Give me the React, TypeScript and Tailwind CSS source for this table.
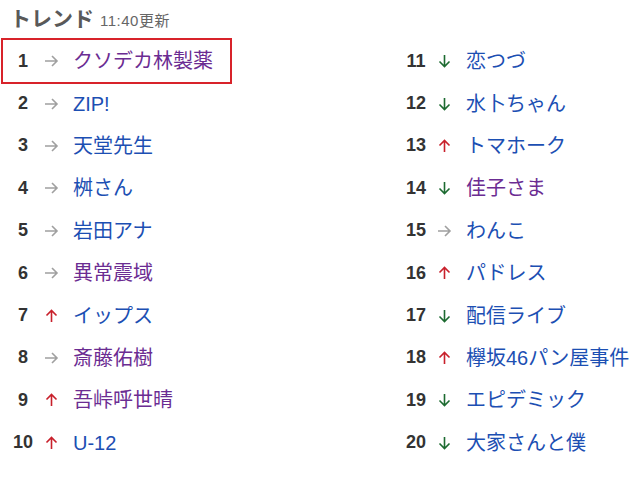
import React from 'react';

type Trend = { rank: number; dir: 'flat' | 'up' | 'down'; word: string; visited?: boolean };

const LEFT: Trend[] = [
  { rank: 1, dir: 'flat', word: 'クソデカ林製薬', visited: true },
  { rank: 2, dir: 'flat', word: 'ZIP!' },
  { rank: 3, dir: 'flat', word: '天堂先生' },
  { rank: 4, dir: 'flat', word: '桝さん' },
  { rank: 5, dir: 'flat', word: '岩田アナ' },
  { rank: 6, dir: 'flat', word: '異常震域', visited: true },
  { rank: 7, dir: 'up', word: 'イップス' },
  { rank: 8, dir: 'flat', word: '斎藤佑樹', visited: true },
  { rank: 9, dir: 'up', word: '吾峠呼世晴', visited: true },
  { rank: 10, dir: 'up', word: 'U-12' },
];

const RIGHT: Trend[] = [
  { rank: 11, dir: 'down', word: '恋つづ' },
  { rank: 12, dir: 'down', word: '水卜ちゃん' },
  { rank: 13, dir: 'up', word: 'トマホーク' },
  { rank: 14, dir: 'down', word: '佳子さま', visited: true },
  { rank: 15, dir: 'flat', word: 'わんこ' },
  { rank: 16, dir: 'up', word: 'パドレス' },
  { rank: 17, dir: 'down', word: '配信ライブ' },
  { rank: 18, dir: 'up', word: '欅坂46パン屋事件' },
  { rank: 19, dir: 'down', word: 'エピデミック' },
  { rank: 20, dir: 'down', word: '大家さんと僕' },
];

function Arrow({ dir }: { dir: Trend['dir'] }) {
  if (dir === 'flat') {
    return (
      <svg width="15" height="14" viewBox="0 0 15 14" fill="none" stroke="#a0a0a0" strokeWidth="1.6">
        <path d="M1 7h12M8 2l5 5-5 5" />
      </svg>
    );
  }
  if (dir === 'up') {
    return (
      <svg width="15" height="14" viewBox="0 0 15 14" fill="none" stroke="#c8202b" strokeWidth="1.6">
        <path d="M7.5 13V1.5M2.5 6.5l5-5 5 5" />
      </svg>
    );
  }
  return (
    <svg width="15" height="14" viewBox="0 0 15 14" fill="none" stroke="#1c6a30" strokeWidth="1.6">
      <path d="M7.5 1v11.5M2.5 7.5l5 5 5-5" />
    </svg>
  );
}

function Row({ t }: { t: Trend }) {
  return (
    <li
      className={
        'flex items-center h-[42.4px] ' +
        (t.rank === 1 ? 'w-[227px] outline-2 outline-[#d8232a]' : '')
      }
    >
      <span className="w-[40px] text-center text-[18px] font-bold text-[#333]">{t.rank}</span>
      <span className="w-[30px] pl-[1px] flex items-center">
        <Arrow dir={t.dir} />
      </span>
      <span className={'text-[20px] ' + (t.visited ? 'text-[#6b2c92]' : 'text-[#1c4fb3]')}>{t.word}</span>
    </li>
  );
}

export default function App() {
  return (
    <div
      className="w-[638px] h-[479px] bg-white overflow-hidden"
      style={{ fontFamily: '"Liberation Sans", "Noto Sans CJK JP", sans-serif' }}
    >
      <div className="h-[40px] pl-[10px] pt-[3px] flex items-baseline gap-[6px]">
        <h2 className="text-[21px] font-bold text-[#595959]">トレンド</h2>
        <span className="text-[15px] tracking-[0.5px] text-[#666]">11:40更新</span>
      </div>
      <div className="grid grid-cols-[393px_1fr]">
        <ul className="pl-[3px]">
          {LEFT.map((t) => (
            <Row key={t.rank} t={t} />
          ))}
        </ul>
        <ul className="pl-[3px]">
          {RIGHT.map((t) => (
            <Row key={t.rank} t={t} />
          ))}
        </ul>
      </div>
    </div>
  );
}
